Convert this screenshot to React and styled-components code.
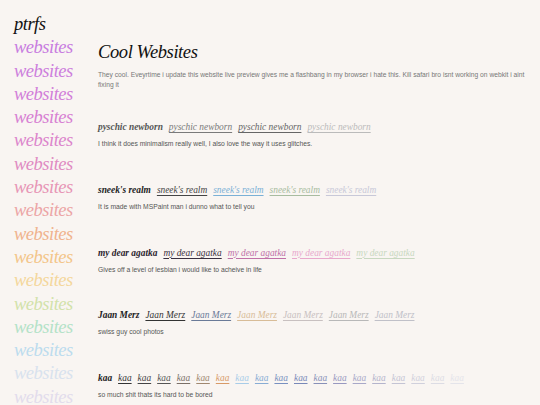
import styled, { createGlobalStyle } from "styled-components";

const GlobalStyle = createGlobalStyle`
  html, body {
    margin: 0;
    padding: 0;
    background: #f9f5f2;
  }
  body {
    font-family: "Liberation Sans", Arial, sans-serif;
    overflow: hidden;
  }
`;

const sideColors = [
  "#c87de0",
  "#cd7fdd",
  "#d27fd9",
  "#d781d3",
  "#dc85cc",
  "#e08bc2",
  "#e796b6",
  "#eca5a6",
  "#f0b38e",
  "#f3c58a",
  "#f4d79c",
  "#d2e2aa",
  "#b4e2c8",
  "#bcdcee",
  "#d8e2ee",
  "#e2dcec",
];

const sites = [
  {
    name: "pyschic newborn",
    colors: ["#555", "#7a7a7a", "#666", "#bbb"],
    text: "I think it does minimalism really well, I also love the way it uses glitches.",
  },
  {
    name: "sneek's realm",
    colors: ["#222", "#444", "#7ab0d6", "#a8bca0", "#c8c8d8"],
    text: "It is made with MSPaint man i dunno what to tell you",
  },
  {
    name: "my dear agatka",
    colors: ["#2a1e2e", "#3a3040", "#c070a8", "#e8a8cc", "#c8d8c0"],
    text: "Gives off a level of lesbian i would like to acheive in life",
  },
  {
    name: "Jaan Merz",
    colors: ["#222", "#333", "#6a7a98", "#d8bc98", "#c8c0c0", "#b8b8b8", "#c0c0c8"],
    text: "swiss guy cool photos",
  },
  {
    name: "kaa",
    colors: [
      "#222", "#333", "#444", "#555", "#7a7068", "#a08870", "#d89a68",
      "#a8cce8", "#88acd4", "#7890c0", "#7888b8", "#8890b8", "#9898c0",
      "#a8a8c8", "#b4b4cc", "#c4c4d4", "#d0d0dc", "#dcdce4", "#e4e4ea",
    ],
    text: "so much shit thats its hard to be bored",
  },
];

const App = () => {
  return (
    <>
      <GlobalStyle />
      <Page>
        <Sidebar>
          <Logo>ptrfs</Logo>
          {sideColors.map((c, i) => (
            <SideLink key={i} $color={c}>
              websites
            </SideLink>
          ))}
        </Sidebar>
        <Main>
          <Title>Cool Websites</Title>
          <Intro>
            They cool. Eveyrtime i update this website live preview gives me a
            flashbang in my browser i hate this. Kill safari bro isnt working on
            webkit i aint fixing it
          </Intro>
          {sites.map((s) => (
            <Entry key={s.name}>
              <Names>
                {s.colors.map((c, i) =>
                  i === 0 ? (
                    <Lead key={i} $color={c}>
                      {s.name}
                    </Lead>
                  ) : (
                    <SiteLink key={i} $color={c}>
                      {s.name}
                    </SiteLink>
                  )
                )}
              </Names>
              <Desc>{s.text}</Desc>
            </Entry>
          ))}
        </Main>
      </Page>
    </>
  );
};

export default App;

const Page = styled.div`
  display: flex;
  width: 540px;
  height: 405px;
  overflow: hidden;
`;

const Sidebar = styled.div`
  width: 84px;
  padding: 13px 0 0 14px;
  display: flex;
  flex-direction: column;
  flex-shrink: 0;
  font-family: "Liberation Serif", "Times New Roman", serif;
  font-style: italic;
  font-size: 18.5px;
  line-height: 23.3px;
  letter-spacing: -0.5px;
`;

const Logo = styled.div`
  color: #111;
`;

const SideLink = styled.div`
  color: ${(p) => p.$color};
`;

const Main = styled.div`
  flex: 1;
  padding: 40px 10px 0 0;
  display: flex;
  flex-direction: column;
`;

const Title = styled.div`
  font-family: "Liberation Serif", "Times New Roman", serif;
  font-style: italic;
  font-size: 18.5px;
  line-height: 24px;
  letter-spacing: -0.4px;
  color: #111;
`;

const Intro = styled.div`
  margin-top: 6px;
  font-size: 6.7px;
  line-height: 9.5px;
  color: #777;
`;

const Entry = styled.div`
  margin-top: 30px;
  display: flex;
  flex-direction: column;
  & + & {
    margin-top: 33.75px;
  }
`;

const Names = styled.div`
  display: flex;
  gap: 6px;
  white-space: nowrap;
  font-family: "Liberation Serif", "Times New Roman", serif;
  font-style: italic;
  font-size: 9.4px;
  line-height: 16px;
`;

const Lead = styled.span`
  font-weight: 700;
  color: ${(p) => p.$color};
`;

const SiteLink = styled.a`
  color: ${(p) => p.$color};
  text-decoration: underline;
  text-underline-offset: 2px;
  cursor: pointer;
`;

const Desc = styled.div`
  margin-top: 4px;
  font-size: 6.75px;
  line-height: 9px;
  color: #555;
`;
